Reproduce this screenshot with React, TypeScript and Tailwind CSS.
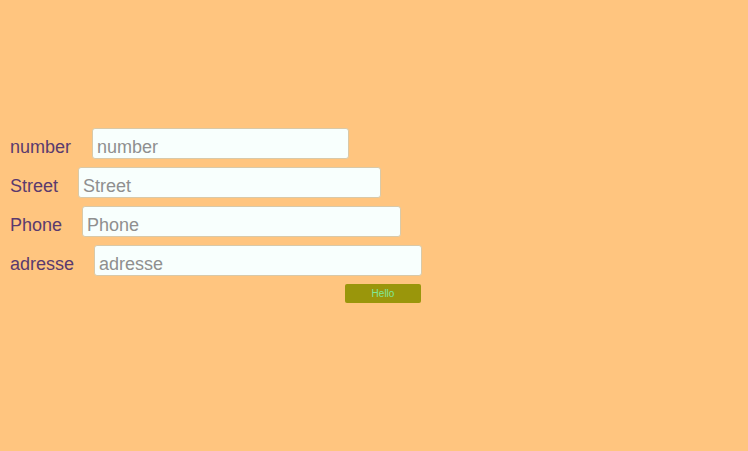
import React from "react";

const rows = [
  { label: "number", cls: "w-[257px] ml-[21px]" },
  { label: "Street", cls: "w-[303px] ml-[20px]" },
  { label: "Phone", cls: "w-[319px] ml-[20px]" },
  { label: "adresse", cls: "w-[328px] ml-[20px]" },
];

export default function App() {
  return (
    <div className="w-[748px] h-[451px] bg-[#ffc57f] pt-[128px] pl-[10px] font-['Liberation_Sans',Arial,sans-serif]">
      <div className="flex flex-col gap-[8px] w-[411px]">
        {rows.map((r) => (
          <div key={r.label} className="flex items-start h-[31px]">
            <span className="text-[18px] leading-[31px] pt-[4px] text-[#5a3a6e]">{r.label}</span>
            <input
              placeholder={r.label}
              className={`${r.cls} shrink-0 h-[31px] bg-[#f8fffd] border border-[#d9c9a8] rounded-[3px] pl-[4px] pr-[4px] pt-[7px] pb-0 text-[18px] placeholder:text-[#8f8f8f] outline-none`}
            />
          </div>
        ))}
        <div className="flex justify-end">
          <button className="w-[76px] h-[19px] bg-[#9a960b] rounded-[2px] text-[10px] text-[#80e896]">
            Hello
          </button>
        </div>
      </div>
    </div>
  );
}
